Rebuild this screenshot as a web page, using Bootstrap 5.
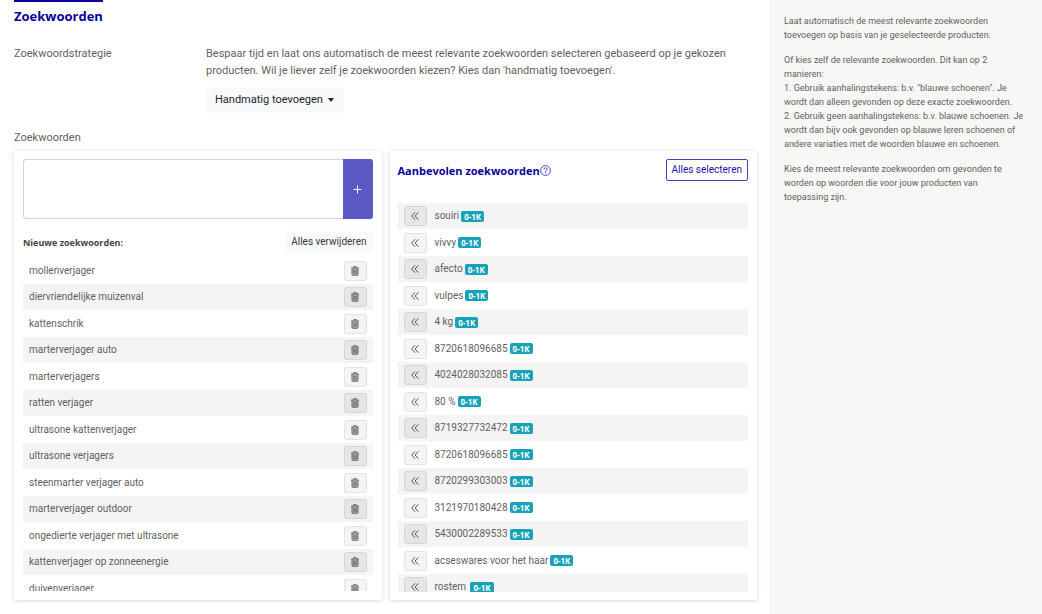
<!DOCTYPE html>
<html lang="nl">
<head>
<meta charset="utf-8">
<meta name="viewport" content="width=device-width, initial-scale=1">
<title>Zoekwoorden</title>
<link href="https://cdn.jsdelivr.net/npm/bootstrap@5.3.0/dist/css/bootstrap.min.css" rel="stylesheet">
<style>
  :root { --brand: #09009d; --ink: #5f5f5f; }
  body { font: 11px/17px Roboto, "Open Sans", sans-serif; color: var(--ink); background: #fff; }
  .content { padding: 0 13px 13px 14px; }
  .page-title, .list-title, .panel-title { font-family: "Open Sans", sans-serif; font-weight: 700; }
  .page-title { width: fit-content; margin-bottom: 20px; border-top: 2px solid var(--brand); padding-top: 5px; color: var(--brand); font-size: 13px; line-height: 18px; }
  .field-name { width: 192px; flex: none; }
  .field-head { margin: 16px 0 5px; font-size: 11px; line-height: 17px; font-weight: 400; color: var(--ink); }
  .strategy { width: 138px; height: 26px; padding: 0 8px; font-size: 11px; line-height: 24px; color: #212529; border: 1px solid #f8f9fa; border-radius: 3px;
    background: #f8f9fa url("data:image/svg+xml,%3Csvg xmlns='http://www.w3.org/2000/svg' viewBox='0 0 6 4'%3E%3Cpath d='M0 0h6L3 4z' fill='%23212529'/%3E%3C/svg%3E") no-repeat right 9px center / 6px 4px; }
  .panel { border: 0; border-radius: 0; box-shadow: 0 1px 4px rgba(0,0,0,.17); padding: 8px 9px; }
  .panel-suggest { padding-left: 8px; }
  .suggest-head { margin-bottom: 22px; }
  .entry { height: 60px; }
  .entry textarea { border: 1px solid #ced4da; border-right: 0; border-radius: 3px 0 0 3px; resize: none; }
  .add-btn { width: 30px; flex: none; padding: 0; background: #5a58c3; border: 0; border-radius: 0 3px 3px 0; display: grid; place-items: center; }
  .small-btn { font-size: 10px; line-height: 14px; padding: 3px 5px; border-radius: 2px; }
  .clear-btn { background: #f8f9fa; color: #343a40; }
  .select-btn { border-color: #4340bd; color: #1c14a8; }
  .list-title { font-size: 9px; line-height: 17px; color: #444; margin: 0; }
  .panel-title { font-size: 11px; line-height: 17px; color: var(--brand); margin: 0; }
  .words { height: 334px; overflow-y: auto; scrollbar-width: none; font-size: 10px; line-height: 16px; margin: 0; }
  .words::-webkit-scrollbar { display: none; }
  .words li { display: flex; align-items: center; height: 27px; padding: 0 6px; }
  .start-plain li:nth-child(even), .start-shaded li:nth-child(odd) { height: 26px; background: #f4f4f4; }
  .start-shaded { height: 389px; }
  .start-shaded .icon-btn { margin-right: 8px; }
  .icon-btn { width: 23px; height: 20px; flex: none; padding: 0; display: grid; place-items: center; color: #444; background: rgba(0,0,0,.043); border: 1px solid rgba(0,0,0,.07); border-radius: 3px; }
  li:nth-child(even) .trash-btn, li:nth-child(odd) .back-btn { background: rgba(0,0,0,.055); }
  .volume { font: 700 8px/11px "Open Sans", sans-serif; padding: 0 3px; margin-left: 2px; border-radius: 2px; background: #17a2b8; color: #fff; }
  .help { width: 272px; flex: none; background: #f7f7f5; padding: 14px; font-size: 9px; line-height: 14px; }
  .help p { margin: 0 0 11px; }
</style>
</head>
<body>
<svg class="d-none" aria-hidden="true">
  <symbol id="trash" viewBox="0 0 10 10"><path d="M2.300 2.500h5.400v6.500H2.300z" fill="currentColor" opacity=".35"/><path d="M3.500 1.500V.7h3v.8M1.200 2h7.600M2 2v6.500q0 .8.8.8h4.400q.8 0 .8-.8V2M4 3.500V8M6 3.500V8" fill="none" stroke="currentColor" stroke-width=".8"/></symbol>
  <symbol id="back" viewBox="0 0 8 8"><path d="M4 .3.7 4 4 7.700M7.400.3 4.100 4l3.300 3.700" fill="none" stroke="currentColor" stroke-width=".9"/></symbol>
</svg>
<div class="d-flex min-vh-100">
  <main class="content flex-grow-1">
    <h1 class="page-title">Zoekwoorden</h1>
    <div class="d-flex">
      <label class="field-name" for="strategy">Zoekwoordstrategie</label>
      <div>
        <p class="mb-2">Bespaar tijd en laat ons automatisch de meest relevante zoekwoorden selecteren gebaseerd op je gekozen<br>producten. Wil je liever zelf je zoekwoorden kiezen? Kies dan 'handmatig toevoegen'.</p>
        <select id="strategy" class="form-select strategy"><option>Handmatig toevoegen</option></select>
      </div>
    </div>
    <h2 class="field-head">Zoekwoorden</h2>
    <div class="row gx-2">
      <section class="col-6">
        <div class="card panel h-100">
          <div class="entry d-flex">
            <textarea class="form-control" aria-label="Nieuw zoekwoord"></textarea>
            <button class="btn add-btn" type="button" aria-label="Toevoegen"><svg width="9" height="9" viewBox="0 0 9 9"><path d="M4.500.5v8M.5 4.500h8" stroke="#fff"/></svg></button>
          </div>
          <div class="d-flex justify-content-between align-items-center mt-2 pt-1 mb-1">
            <h3 class="list-title">Nieuwe zoekwoorden:</h3>
            <button class="btn small-btn clear-btn" type="button">Alles verwijderen</button>
          </div>
          <ul class="list-unstyled words start-plain">
            <li><span class="me-auto">mollenverjager</span><button class="btn icon-btn trash-btn" type="button" aria-label="Verwijderen"><svg width="10" height="10"><use href="#trash"/></svg></button></li>
            <li><span class="me-auto">diervriendelijke muizenval</span><button class="btn icon-btn trash-btn" type="button" aria-label="Verwijderen"><svg width="10" height="10"><use href="#trash"/></svg></button></li>
            <li><span class="me-auto">kattenschrik</span><button class="btn icon-btn trash-btn" type="button" aria-label="Verwijderen"><svg width="10" height="10"><use href="#trash"/></svg></button></li>
            <li><span class="me-auto">marterverjager auto</span><button class="btn icon-btn trash-btn" type="button" aria-label="Verwijderen"><svg width="10" height="10"><use href="#trash"/></svg></button></li>
            <li><span class="me-auto">marterverjagers</span><button class="btn icon-btn trash-btn" type="button" aria-label="Verwijderen"><svg width="10" height="10"><use href="#trash"/></svg></button></li>
            <li><span class="me-auto">ratten verjager</span><button class="btn icon-btn trash-btn" type="button" aria-label="Verwijderen"><svg width="10" height="10"><use href="#trash"/></svg></button></li>
            <li><span class="me-auto">ultrasone kattenverjager</span><button class="btn icon-btn trash-btn" type="button" aria-label="Verwijderen"><svg width="10" height="10"><use href="#trash"/></svg></button></li>
            <li><span class="me-auto">ultrasone verjagers</span><button class="btn icon-btn trash-btn" type="button" aria-label="Verwijderen"><svg width="10" height="10"><use href="#trash"/></svg></button></li>
            <li><span class="me-auto">steenmarter verjager auto</span><button class="btn icon-btn trash-btn" type="button" aria-label="Verwijderen"><svg width="10" height="10"><use href="#trash"/></svg></button></li>
            <li><span class="me-auto">marterverjager outdoor</span><button class="btn icon-btn trash-btn" type="button" aria-label="Verwijderen"><svg width="10" height="10"><use href="#trash"/></svg></button></li>
            <li><span class="me-auto">ongedierte verjager met ultrasone</span><button class="btn icon-btn trash-btn" type="button" aria-label="Verwijderen"><svg width="10" height="10"><use href="#trash"/></svg></button></li>
            <li><span class="me-auto">kattenverjager op zonneenergie</span><button class="btn icon-btn trash-btn" type="button" aria-label="Verwijderen"><svg width="10" height="10"><use href="#trash"/></svg></button></li>
            <li><span class="me-auto">duivenverjager</span><button class="btn icon-btn trash-btn" type="button" aria-label="Verwijderen"><svg width="10" height="10"><use href="#trash"/></svg></button></li>
          </ul>
        </div>
      </section>
      <section class="col-6">
        <div class="card panel panel-suggest h-100">
          <div class="suggest-head d-flex justify-content-between align-items-center">
            <h3 class="panel-title d-flex align-items-center">Aanbevolen zoekwoorden<svg width="11" height="11" viewBox="0 0 11 11" role="img" aria-label="Uitleg"><circle cx="5.500" cy="5.500" r="4.900" fill="none" stroke="#3a35b5" stroke-width=".9"/><path d="M4 4.300q0-1.500 1.500-1.500T7 4.200q0 .8-.8 1.200t-.7 1.200M5.500 7.300v1" fill="none" stroke="#3a35b5" stroke-width=".9"/></svg></h3>
            <button class="btn small-btn select-btn" type="button">Alles selecteren</button>
          </div>
          <ul class="list-unstyled words start-shaded">
            <li><button class="btn icon-btn back-btn" type="button" aria-label="Toevoegen"><svg width="8" height="8"><use href="#back"/></svg></button><span>souiri</span><span class="volume">0-1K</span></li>
            <li><button class="btn icon-btn back-btn" type="button" aria-label="Toevoegen"><svg width="8" height="8"><use href="#back"/></svg></button><span>vivvy</span><span class="volume">0-1K</span></li>
            <li><button class="btn icon-btn back-btn" type="button" aria-label="Toevoegen"><svg width="8" height="8"><use href="#back"/></svg></button><span>afecto</span><span class="volume">0-1K</span></li>
            <li><button class="btn icon-btn back-btn" type="button" aria-label="Toevoegen"><svg width="8" height="8"><use href="#back"/></svg></button><span>vulpes</span><span class="volume">0-1K</span></li>
            <li><button class="btn icon-btn back-btn" type="button" aria-label="Toevoegen"><svg width="8" height="8"><use href="#back"/></svg></button><span>4 kg</span><span class="volume">0-1K</span></li>
            <li><button class="btn icon-btn back-btn" type="button" aria-label="Toevoegen"><svg width="8" height="8"><use href="#back"/></svg></button><span>8720618096685</span><span class="volume">0-1K</span></li>
            <li><button class="btn icon-btn back-btn" type="button" aria-label="Toevoegen"><svg width="8" height="8"><use href="#back"/></svg></button><span>4024028032085</span><span class="volume">0-1K</span></li>
            <li><button class="btn icon-btn back-btn" type="button" aria-label="Toevoegen"><svg width="8" height="8"><use href="#back"/></svg></button><span>80 %</span><span class="volume">0-1K</span></li>
            <li><button class="btn icon-btn back-btn" type="button" aria-label="Toevoegen"><svg width="8" height="8"><use href="#back"/></svg></button><span>8719327732472</span><span class="volume">0-1K</span></li>
            <li><button class="btn icon-btn back-btn" type="button" aria-label="Toevoegen"><svg width="8" height="8"><use href="#back"/></svg></button><span>8720618096685</span><span class="volume">0-1K</span></li>
            <li><button class="btn icon-btn back-btn" type="button" aria-label="Toevoegen"><svg width="8" height="8"><use href="#back"/></svg></button><span>8720299303003</span><span class="volume">0-1K</span></li>
            <li><button class="btn icon-btn back-btn" type="button" aria-label="Toevoegen"><svg width="8" height="8"><use href="#back"/></svg></button><span>3121970180428</span><span class="volume">0-1K</span></li>
            <li><button class="btn icon-btn back-btn" type="button" aria-label="Toevoegen"><svg width="8" height="8"><use href="#back"/></svg></button><span>5430002289533</span><span class="volume">0-1K</span></li>
            <li><button class="btn icon-btn back-btn" type="button" aria-label="Toevoegen"><svg width="8" height="8"><use href="#back"/></svg></button><span>acseswares voor het haar</span><span class="volume">0-1K</span></li>
            <li><button class="btn icon-btn back-btn" type="button" aria-label="Toevoegen"><svg width="8" height="8"><use href="#back"/></svg></button><span>rostem&nbsp;</span><span class="volume">0-1K</span></li>
          </ul>
        </div>
      </section>
    </div>
  </main>
  <aside class="help">
    <p>Laat automatisch de meest relevante zoekwoorden<br>toevoegen op basis van je geselecteerde producten.</p>
    <p>Of kies zelf de relevante zoekwoorden. Dit kan op 2<br>manieren:<br>1. Gebruik aanhalingstekens: b.v. "blauwe schoenen". Je<br>wordt dan alleen gevonden op deze exacte zoekwoorden.<br>2. Gebruik geen aanhalingstekens: b.v. blauwe schoenen. Je<br>wordt dan bijv ook gevonden op blauwe leren schoenen of<br>andere variaties met de woorden blauwe en schoenen.</p>
    <p>Kies de meest relevante zoekwoorden om gevonden te<br>worden op woorden die voor jouw producten van<br>toepassing zijn.</p>
  </aside>
</div>
<script src="https://cdn.jsdelivr.net/npm/bootstrap@5.3.0/dist/js/bootstrap.bundle.min.js"></script>
</body>
</html>
